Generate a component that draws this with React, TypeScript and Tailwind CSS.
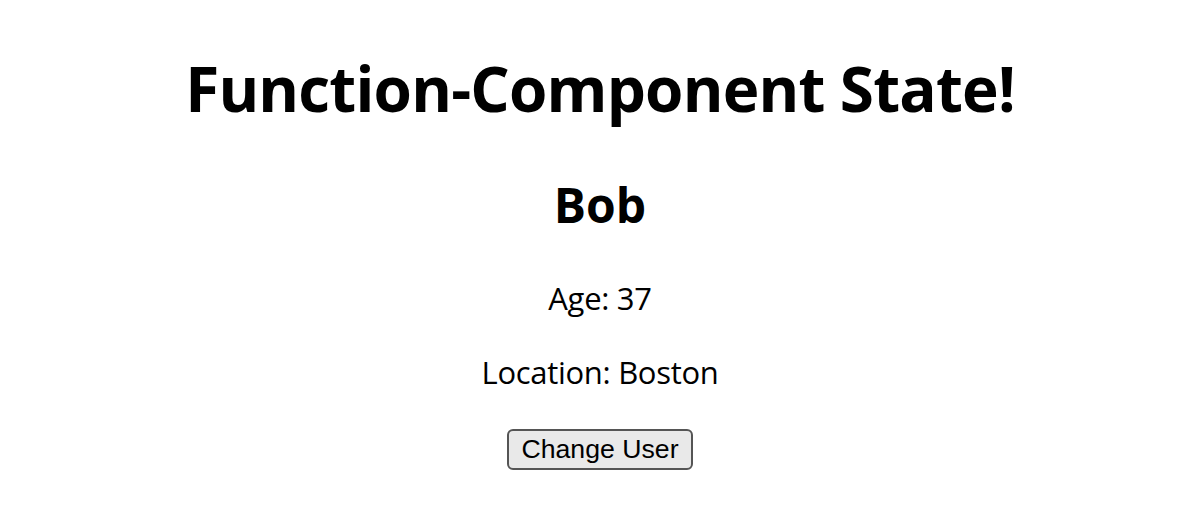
import React, { useState } from "react";

const USERS = [
  { name: "Bob", age: 37, location: "Boston" },
  { name: "Alice", age: 29, location: "Denver" },
];

export default function App() {
  const [idx, setIdx] = useState(0);
  const user = USERS[idx];

  return (
    <div className="w-[1200px] h-[520px] bg-white text-black overflow-hidden font-['Open_Sans',sans-serif] flex flex-col items-center">
      <h1 className="mt-[48px] text-[62px] leading-[80px] font-bold tracking-[-0.8px]">Function-Component State!</h1>
      <h2 className="mt-[45px] text-[48px] leading-[64px] font-bold">{user.name}</h2>
      <p className="mt-[40px] text-[31px] leading-[42px] tracking-[-0.3px]">Age: {user.age}</p>
      <p className="mt-[32px] text-[31px] leading-[42px] tracking-[-0.3px]">Location: {user.location}</p>
      <button
        onClick={() => setIdx((i) => (i + 1) % USERS.length)}
        className="mt-[36px] h-[41px] px-[12px] border-2 border-[#555555] bg-[#e9e9e9] rounded-[6px] font-['Liberation_Sans',Arial,sans-serif] text-[26.67px] leading-[31px]"
      >
        Change User
      </button>
    </div>
  );
}
